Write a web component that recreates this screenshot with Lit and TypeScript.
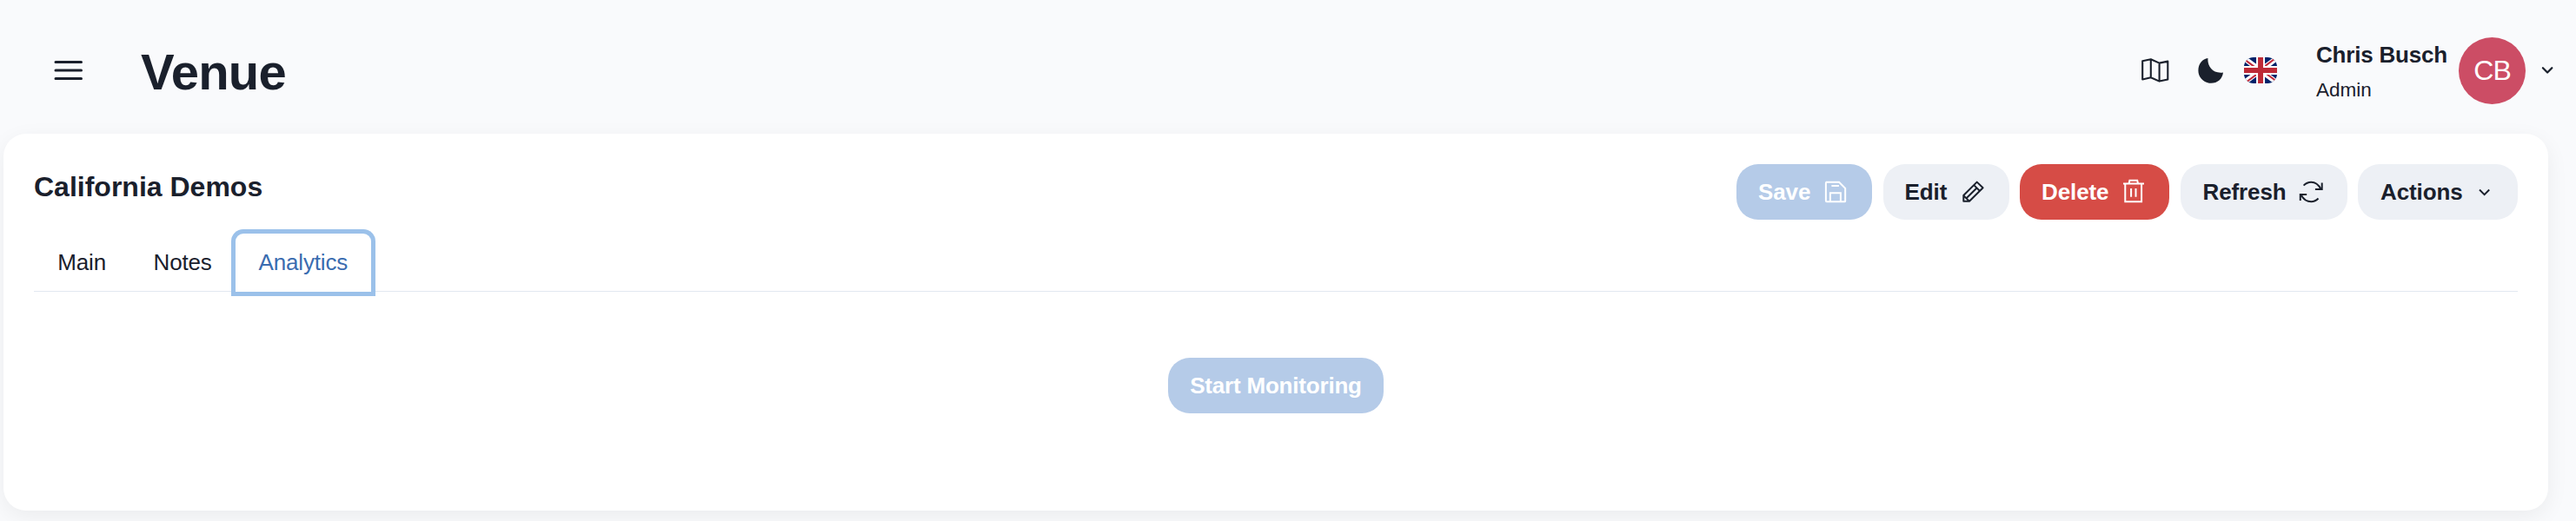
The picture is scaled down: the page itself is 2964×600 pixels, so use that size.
import { LitElement, html, css, svg } from "lit";
import { customElement } from "lit/decorators.js";

const icons = {
  save: svg`<path d="M4 5.7h15.2l7.1 7.1v14.5q0 .9-.9.9H5q-1 0-1-1V6.6q0-.9.9-.9z M9 27.5v-9.3h12v9.3 M10.5 10h8.5" transform="translate(-.1 -.9)"/>`,
  edit: svg`<path stroke-linejoin="round" d="M19.7 4.6L26.6 11.2 11 26.7H4.3V20z M16.2 8.1l6.6 6.7 M19.5 11.5L7.6 23.2 M4.3 20.2l6.6 6.4"/>`,
  trash: svg`<path d="M4 6.6h24 M6.3 6.8v20.4h18.8V6.8 M10.6 6.2l.8-3.4h8.8l.8 3.4 M13.1 12v9.8 M18.5 12v9.8"/>`,
  refresh: svg`<path d="M6.6 8.6Q10.5 4.7 15.3 4.7Q22.3 4.7 26.4 12.7 M27.7 5.6v7.5h-7.8 M23.5 23.5Q20 27.3 15.3 27.3Q8 27.3 4 20 M2.8 26v-6.9h7.4"/>`,
  chevron: svg`<path d="M13 13.5l5.6 5.6 5.6-5.6"/>`,
};

@customElement("app-root")
export class AppRoot extends LitElement {
  static styles = css`
    :host {
      display: block;
      height: 600px;
      overflow: hidden;
      background: #f9fafc;
      color: #1a202c;
      font-family: "Liberation Sans", Arial, sans-serif;
      font-size: 26px;
    }
    * { box-sizing: border-box; }
    svg { display: block; fill: none; stroke: currentColor; flex: none; overflow: visible; }
    .header { height: 154px; display: flex; align-items: flex-start; padding: 43px 20px 0 61px; }
    .menu { margin-top: 21px; }
    .title { margin: 5px 0 0 65px; font-size: 58px; line-height: 70px; font-weight: 700; letter-spacing: -0.8px; }
    .tools { margin-left: auto; display: flex; align-items: flex-start; }
    .map { margin: 20px 0 0; }
    .moon { margin: 20px 0 0 32px; }
    .flag { margin: 23px 0 0 22px; width: 38px; height: 30px; border-radius: 11px; overflow: hidden; stroke: none; }
    .user { margin: 0 13px 0 45px; width: 151px; white-space: nowrap; }
    .name { font-weight: 700; line-height: 40px; letter-spacing: -0.2px; }
    .role { font-size: 22.5px; line-height: 41px; }
    .avatar { width: 77px; height: 77px; border-radius: 50%; background: #cc4d65; color: #fff; font-size: 32px; line-height: 77px; text-align: center; letter-spacing: -0.9px; }
    .caret { margin: 31px 1px 0 17px; }
    .card { margin: 0 32px 0 4px; height: 434px; background: #fff; border-radius: 26px; padding: 35px 35px 0; box-shadow: 0 7px 26px rgba(0, 0, 0, 0.06); }
    .top { height: 75px; display: flex; align-items: flex-start; justify-content: space-between; }
    .heading { margin: 0; font-size: 32px; line-height: 53px; font-weight: 700; }
    .actions { display: flex; gap: 12.5px; }
    .btn { height: 64px; border: 0; border-radius: 25px; padding: 0 25px; display: flex; align-items: center; justify-content: space-between; font: inherit; font-weight: 700; background: #edf0f5; color: #1a202c; white-space: nowrap; letter-spacing: -0.1px; }
    .btn svg { stroke-width: 2; }
    .primary { background: #b5cbe8; color: #fff; }
    .danger { background: #d64c46; color: #fff; }
    .w-save { width: 156px; }
    .w-edit { width: 145px; }
    .w-delete { width: 172px; }
    .w-refresh { width: 192px; padding-left: 26px; }
    .w-actions { width: 184px; padding-left: 26px; }
    .tabs { height: 72px; display: flex; border-bottom: 1px solid #e2e8f0; }
    .tab { height: 71px; padding: 0 27.25px; border: 0; background: none; font: inherit; line-height: 77px; color: inherit; letter-spacing: -0.15px; }
    .tab.active { padding: 0 26.5px; background: #fff; color: #3a6cb0; border-radius: 9px 9px 0 0; height: 67px; margin-top: 5px; line-height: 67px; box-shadow: 0 0 0 5px #9bc1ea; }
    .body { display: flex; justify-content: center; padding-top: 76px; }
    .start { width: 248px; justify-content: center; letter-spacing: -0.2px; }
  `;

  render() {
    return html`
      <header class="header">
        <svg class="menu" width="36" height="36" viewBox="0 0 36 36" stroke-width="3" stroke-linecap="round"><path d="M3 7.5h29.5M3 17h29.5M3 26.5h29.5"/></svg>
        <h1 class="title">Venue</h1>
        <div class="tools">
          <svg class="map" width="36" height="36" viewBox="0 0 36 36" stroke-width="2.1" stroke-linejoin="round"><path d="M5.2 7.2l9.6-2 9.8 4.4 9.7-2V28.4l-9.7 2.2-9.8-4.4-9.6 2.2z M14.8 5.2v21 M24.6 9.6v21"/></svg>
          <svg class="moon" width="32" height="36" viewBox="0 0 32 36"><path d="M13.5 4.1C12.6 12.8 18.7 22.2 31 20.5C30 27.9 24.7 32.8 17 32.8C8.9 32.8 2.4 26.3 2.4 18.3C2.4 10.5 7.2 5 13.5 4.1z" fill="currentColor" stroke="none" transform="translate(-1 0)"/></svg>
          <svg class="flag" viewBox="0 0 640 480" preserveAspectRatio="xMidYMid slice">
            <path fill="#012169" d="M0 0h640v480H0z"/>
            <path fill="#fff" d="M75 0l244 181L562 0h78v62L400 241l240 178v61h-80L320 301 81 480H0v-60l239-178L0 64V0z"/>
            <path fill="#c02c3c" d="M424 281l216 159v40L369 281zM240 301l6 35L54 480H0zM640 0v3L391 191l2-44L590 0zM0 0l239 176h-60L0 42z"/>
            <path fill="#fff" d="M241 0v480h160V0zM0 160v160h640V160z"/>
            <path fill="#bd2a36" d="M0 193v96h640v-96zM273 0v480h96V0z"/>
          </svg>
          <div class="user">
            <div class="name">Chris Busch</div>
            <div class="role">Admin</div>
          </div>
          <div class="avatar">CB</div>
          <svg class="caret" width="20" height="16" viewBox="0 0 20 16" stroke-width="2.3" stroke-linecap="round" stroke-linejoin="round"><path d="M2.9 4.3L8.1 9.5 13.3 4.3"/></svg>
        </div>
      </header>
      <main class="card">
        <div class="top">
          <h2 class="heading">California Demos</h2>
          <div class="actions">
            ${this.button("Save", "save", "primary w-save")}
            ${this.button("Edit", "edit", "w-edit")}
            ${this.button("Delete", "trash", "danger w-delete")}
            ${this.button("Refresh", "refresh", "w-refresh")}
            ${this.button("Actions", "chevron", "w-actions")}
          </div>
        </div>
        <nav class="tabs">
          <button class="tab">Main</button>
          <button class="tab">Notes</button>
          <button class="tab active">Analytics</button>
        </nav>
        <section class="body">
          <button class="btn primary start">Start Monitoring</button>
        </section>
      </main>
    `;
  }

  private button(label: string, icon: keyof typeof icons, look: string) {
    return html`<button class="btn ${look}">
      <span>${label}</span>
      <svg width="32" height="32" viewBox="0 0 32 32">${icons[icon]}</svg>
    </button>`;
  }
}
